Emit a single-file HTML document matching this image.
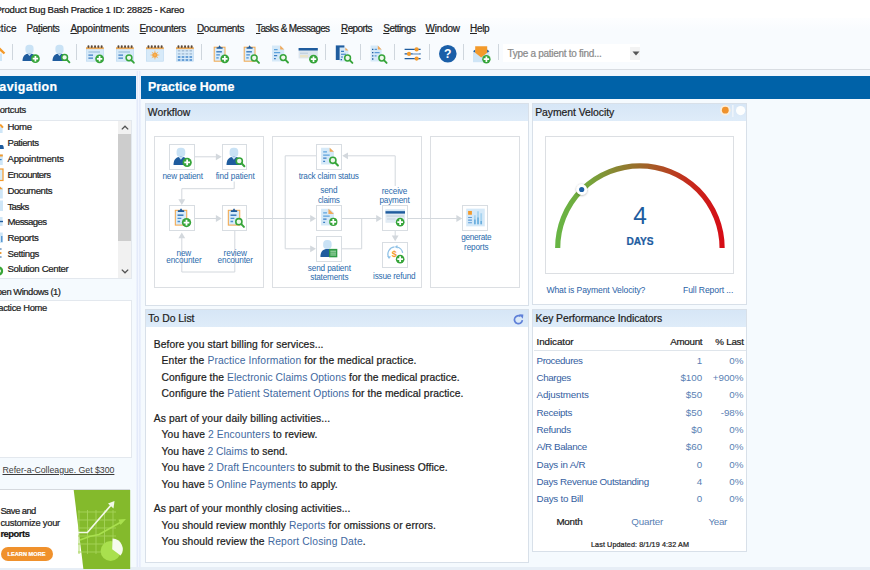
<!DOCTYPE html>
<html lang="en"><head><meta charset="utf-8"><title>Product Bug Bash Practice 1 ID: 28825 - Kareo</title>
<style>
html,body{margin:0;padding:0}
body{width:870px;height:570px;overflow:hidden;position:relative;background:#f5fafe;font-family:"Liberation Sans",sans-serif;color:#222}
.t{position:absolute;white-space:pre;margin:0;-webkit-text-stroke:0.22px currentColor}
.b{position:absolute;box-sizing:border-box}
svg{position:absolute;overflow:visible}
a{color:inherit;text-decoration:none}
.lk{color:#41699f;-webkit-text-stroke:0}
.n{-webkit-text-stroke:0}
u{text-decoration:underline;text-underline-offset:1px}
</style></head><body>
<div class="b" style="left:0px;top:0px;width:870px;height:18px;background:#fff"></div>
<div class="b" style="left:0px;top:18px;width:870px;height:51px;background:linear-gradient(#fdfeff,#f8fbfe 25%)"></div>
<div class="b" style="left:0px;top:69px;width:870px;height:1px;background:#d9dde2"></div>
<div class="b" style="left:0px;top:70px;width:870px;height:6.3px;background:#f1f6fc"></div>
<div class="b" style="left:0px;top:76.3px;width:135.5px;height:22.4px;background:#0062a8"></div>
<div class="b" style="left:141px;top:76.3px;width:729px;height:22.4px;background:#0062a8"></div>
<div class="b" style="left:135.8px;top:71px;width:4.8px;height:496px;background:linear-gradient(90deg,#f6f9ff,#dfe7f8 25%,#f2f6ff 50%,#dfe7f8 80%,#f6f9ff)"></div>
<div class="b" style="left:0px;top:566.5px;width:870px;height:3.5px;background:#e7eef6"></div>
<div class="b" style="left:12.0px;top:43.5px;width:1.0px;height:16.5px;background:#cfd6dd"></div>
<div class="b" style="left:76.2px;top:43.5px;width:1.0px;height:16.5px;background:#cfd6dd"></div>
<div class="b" style="left:200.8px;top:43.5px;width:1.0px;height:16.5px;background:#cfd6dd"></div>
<div class="b" style="left:324.8px;top:43.5px;width:1.0px;height:16.5px;background:#cfd6dd"></div>
<div class="b" style="left:359.5px;top:43.5px;width:1.0px;height:16.5px;background:#cfd6dd"></div>
<div class="b" style="left:394.2px;top:43.5px;width:1.0px;height:16.5px;background:#cfd6dd"></div>
<div class="b" style="left:428.5px;top:43.5px;width:1.0px;height:16.5px;background:#cfd6dd"></div>
<div class="b" style="left:463.2px;top:43.5px;width:1.0px;height:16.5px;background:#cfd6dd"></div>
<div class="b" style="left:498.2px;top:43.5px;width:1.0px;height:16.5px;background:#cfd6dd"></div>
<div class="b" style="left:503px;top:43.5px;width:137px;height:18.5px;background:#fff"></div>
<div class="b" style="left:630px;top:46.5px;width:10px;height:13.5px;background:#f3f3f3"></div>
<svg style="left:632px;top:51px" width="8" height="5" viewBox="0 0 8 5"><path d="M0.5 0.5h7l-3.5 4z" fill="#555"/></svg>
<div class="b" style="left:-2px;top:119.5px;width:134px;height:159.5px;background:#fff;border:1px solid #e3e8ee"></div>
<div class="b" style="left:118.3px;top:120.5px;width:12.7px;height:157.5px;background:#f1f1f1"></div>
<div class="b" style="left:118.3px;top:134px;width:12.7px;height:107px;background:#cdcdcd"></div>
<svg style="left:120.6px;top:124.5px" width="8" height="5" viewBox="0 0 8 5"><path d="M0.8 4.4L4 1.2l3.2 3.2" fill="none" stroke="#505050" stroke-width="1.3"/></svg>
<svg style="left:120.6px;top:268.7px" width="8" height="5" viewBox="0 0 8 5"><path d="M0.8 0.6L4 3.8L7.2 0.6" fill="none" stroke="#505050" stroke-width="1.3"/></svg>
<div class="b" style="left:-2px;top:300px;width:134px;height:157.5px;background:#fff;border:1px solid #e3e8ee"></div>
<svg style="left:0;top:0" width="8" height="300" viewBox="0 0 8 300"><rect x="0" y="127" width="2.6" height="6" fill="#cfe6f7"/><path d="M0 124.5L3 127.6" stroke="#f39a2b" stroke-width="2"/><path d="M0 145h2.2c1 0 1.6 1.6 1.6 4H0z" fill="#1f5c9e"/><rect x="0" y="154.5" width="2.8" height="10.5" fill="#cfe6f7"/><rect x="0" y="154.5" width="2.8" height="2" fill="#f39a2b"/><rect x="0" y="159" width="1.6" height="1.2" fill="#3e86c9"/><rect x="-1" y="169" width="4" height="11.5" fill="#d6ebf9" stroke="#f39a2b" stroke-width="1.2"/><rect x="0" y="187.5" width="2.8" height="11" fill="#cfe6f7"/><path d="M0 186.5l2.8 2.8H0z" fill="#f39a2b"/><rect x="0" y="200.5" width="3" height="10.5" fill="#cfe6f7"/><rect x="0" y="217" width="2.6" height="9" fill="#cfe6f7"/><path d="M0 221.5h3" stroke="#1f5c9e" stroke-width="1.4"/><rect x="0" y="232.5" width="2.8" height="10.5" fill="#cfe6f7"/><rect x="1.2" y="236" width="1.2" height="6" fill="#3e86c9"/><path d="M0 249h1.6M0 253h1M0 257h1.6" stroke="#1f5c9e" stroke-width="1.2"/><circle cx="0.6" cy="253" r="1" fill="#f39a2b"/><path d="M0 266.5A4.8 4.8 0 0 1 0 275.5z" fill="#3aa637"/><path d="M0 269.3A2 2 0 0 1 0 272.8z" fill="#e9f6e6"/></svg>
<div class="b" style="left:-2px;top:489.2px;width:132.2px;height:78.8px;background:#fff;border-top:1px solid #d5d9de"></div>
<svg style="left:0;top:489.6px" width="131" height="79" viewBox="0 0 131 79"><polygon points="73.7,0 130.2,0 130.2,79 83.4,79" fill="#84ba2c"/><g stroke="#a6d45a" stroke-width="0.9" fill="none"><path d="M79 20V64"/><path d="M87.5 20V64"/><path d="M96 20V64"/><path d="M104.5 20V64"/><path d="M113 20V64"/><path d="M78 22H116"/><path d="M78 30H116"/><path d="M78 38H116"/><path d="M78 46H116"/><path d="M78 54H116"/><path d="M78 62H116"/></g><path d="M78 42.5H87.4L112 14" fill="none" stroke="#f3f9e8" stroke-width="1.7"/><polygon points="114.5,11 113.5,18.5 108,13.5" fill="#f3f9e8"/><path d="M80 50L89.5 46.5L99 44.5L122 31.5" fill="none" stroke="#a9e04e" stroke-width="1.7"/><polygon points="126,29 120.5,35 118.5,29.5" fill="#a9e04e"/><circle cx="110.6" cy="61" r="10" fill="#a9e04e"/><path d="M112.2 59.2L112.6 48.6A10.6 10.6 0 0 1 120.6 65.6Z" fill="#f6fbee"/></svg>
<div class="b" style="left:0.6px;top:547.3px;width:52.8px;height:14.0px;background:#f0912c;border-radius:7px"></div>
<div class="b" style="left:144.7px;top:103px;width:383.9px;height:202.5px;background:#fff;border:1px solid #d8e0e9"></div>
<div class="b" style="left:145.7px;top:104px;width:381.9px;height:17.3px;background:linear-gradient(#d6e6f6,#dfecf9)"></div>
<div class="b" style="left:532.4px;top:103px;width:214.2px;height:202.2px;background:#fff;border:1px solid #d8e0e9"></div>
<div class="b" style="left:533.4px;top:104px;width:212.2px;height:17.3px;background:linear-gradient(#d6e6f6,#dfecf9)"></div>
<div class="b" style="left:144.7px;top:309px;width:384.5px;height:254px;background:#fff;border:1px solid #d8e0e9"></div>
<div class="b" style="left:145.7px;top:310px;width:382.5px;height:17.3px;background:linear-gradient(#d6e6f6,#dfecf9)"></div>
<div class="b" style="left:532.4px;top:309px;width:215.0px;height:243px;background:#fff;border:1px solid #d8e0e9"></div>
<div class="b" style="left:533.4px;top:310px;width:213.0px;height:17.3px;background:linear-gradient(#d6e6f6,#dfecf9)"></div>
<div class="b" style="left:154px;top:136px;width:110px;height:152px;border:1px solid #dcdfe3"></div>
<div class="b" style="left:272px;top:136px;width:150px;height:152px;border:1px solid #dcdfe3"></div>
<div class="b" style="left:430px;top:136px;width:90.4px;height:152px;border:1px solid #dcdfe3"></div>
<div class="b" style="left:545px;top:136px;width:189px;height:138px;border:1px solid #dcdfe3"></div>
<svg style="left:22.3px;top:44.9px" width="18" height="18" viewBox="0 0 18 18"><rect x="3.4" y="-0.2" width="8.2" height="8.8" rx="3.6" fill="#c9e2f5"/><path d="M0.5 16c0-4.6 2.2-7.6 7-7.6s7 3 7 7.6z" fill="#1f5c9e"/><path d="M5.4 8.5l2.1 2.6 2.1-2.6z" fill="#c9e2f5"/><circle cx="13.4" cy="13.7" r="4.4" fill="#36a53a"/><path d="M13.4 11.0v5.4M10.7 13.7h5.4" stroke="#fff" stroke-width="1.7"/></svg>
<svg style="left:52.3px;top:44.9px" width="18" height="18" viewBox="0 0 18 18"><rect x="3.4" y="-0.2" width="8.2" height="8.8" rx="3.6" fill="#c9e2f5"/><path d="M0.5 16c0-4.6 2.2-7.6 7-7.6s7 3 7 7.6z" fill="#1f5c9e"/><path d="M5.4 8.5l2.1 2.6 2.1-2.6z" fill="#c9e2f5"/><circle cx="12.6" cy="12.4" r="2.9" fill="#eef8ec" stroke="#36a53a" stroke-width="1.5"/><path d="M14.899999999999999 14.7l2.5 2.6" stroke="#36a53a" stroke-width="1.9" stroke-linecap="round"/></svg>
<svg style="left:86.2px;top:44.9px" width="18" height="18" viewBox="0 0 18 18"><rect x="0.3" y="3.6" width="17.2" height="12.6" fill="#d7eaf9" stroke="#b9d8f0" stroke-width="0.6"/><rect x="0" y="2.2" width="17.8" height="1.9" fill="#eba856"/><rect x="1.5" y="0.2" width="1.9" height="2.8" rx="0.9" fill="#5b4a3c"/><rect x="4.8" y="0.2" width="1.9" height="2.8" rx="0.9" fill="#5b4a3c"/><rect x="8.1" y="0.2" width="1.9" height="2.8" rx="0.9" fill="#5b4a3c"/><rect x="11.399999999999999" y="0.2" width="1.9" height="2.8" rx="0.9" fill="#5b4a3c"/><rect x="14.7" y="0.2" width="1.9" height="2.8" rx="0.9" fill="#5b4a3c"/><path d="M2.4 7h11.6" stroke="#9dbfdc" stroke-width="1.2"/><path d="M2.4 10.2h4.6M2.4 13.2h4.6" stroke="#3e7fc4" stroke-width="1.3"/><circle cx="13.6" cy="13.8" r="4.4" fill="#36a53a"/><path d="M13.6 11.100000000000001v5.4M10.899999999999999 13.8h5.4" stroke="#fff" stroke-width="1.7"/></svg>
<svg style="left:116.2px;top:44.9px" width="18" height="18" viewBox="0 0 18 18"><rect x="0.3" y="3.6" width="17.2" height="12.6" fill="#d7eaf9" stroke="#b9d8f0" stroke-width="0.6"/><rect x="0" y="2.2" width="17.8" height="1.9" fill="#eba856"/><rect x="1.5" y="0.2" width="1.9" height="2.8" rx="0.9" fill="#5b4a3c"/><rect x="4.8" y="0.2" width="1.9" height="2.8" rx="0.9" fill="#5b4a3c"/><rect x="8.1" y="0.2" width="1.9" height="2.8" rx="0.9" fill="#5b4a3c"/><rect x="11.399999999999999" y="0.2" width="1.9" height="2.8" rx="0.9" fill="#5b4a3c"/><rect x="14.7" y="0.2" width="1.9" height="2.8" rx="0.9" fill="#5b4a3c"/><path d="M2.4 7h11.6" stroke="#9dbfdc" stroke-width="1.2"/><path d="M2.4 10.2h4.6M2.4 13.2h4.6" stroke="#3e7fc4" stroke-width="1.3"/><circle cx="13" cy="12.8" r="2.9" fill="#eef8ec" stroke="#36a53a" stroke-width="1.5"/><path d="M15.3 15.100000000000001l2.5 2.6" stroke="#36a53a" stroke-width="1.9" stroke-linecap="round"/></svg>
<svg style="left:145.5px;top:44.9px" width="18" height="18" viewBox="0 0 18 18"><rect x="0.3" y="3.6" width="17.2" height="12.6" fill="#d7eaf9" stroke="#b9d8f0" stroke-width="0.6"/><rect x="0" y="2.2" width="17.8" height="1.9" fill="#eba856"/><rect x="1.5" y="0.2" width="1.9" height="2.8" rx="0.9" fill="#5b4a3c"/><rect x="4.8" y="0.2" width="1.9" height="2.8" rx="0.9" fill="#5b4a3c"/><rect x="8.1" y="0.2" width="1.9" height="2.8" rx="0.9" fill="#5b4a3c"/><rect x="11.399999999999999" y="0.2" width="1.9" height="2.8" rx="0.9" fill="#5b4a3c"/><rect x="14.7" y="0.2" width="1.9" height="2.8" rx="0.9" fill="#5b4a3c"/><circle cx="8.9" cy="10" r="2.6" fill="#f39a2b"/><path d="M8.9 5.6v8.8M4.5 10h8.8M5.8 6.9l6.2 6.2M12 6.9l-6.2 6.2" stroke="#f5b25e" stroke-width="0.8"/></svg>
<svg style="left:175.7px;top:44.9px" width="18" height="18" viewBox="0 0 18 18"><rect x="0.3" y="3.6" width="17.2" height="12.6" fill="#d7eaf9" stroke="#b9d8f0" stroke-width="0.6"/><rect x="0" y="2.2" width="17.8" height="1.9" fill="#eba856"/><rect x="1.5" y="0.2" width="1.9" height="2.8" rx="0.9" fill="#5b4a3c"/><rect x="4.8" y="0.2" width="1.9" height="2.8" rx="0.9" fill="#5b4a3c"/><rect x="8.1" y="0.2" width="1.9" height="2.8" rx="0.9" fill="#5b4a3c"/><rect x="11.399999999999999" y="0.2" width="1.9" height="2.8" rx="0.9" fill="#5b4a3c"/><rect x="14.7" y="0.2" width="1.9" height="2.8" rx="0.9" fill="#5b4a3c"/><path d="M1.8 5.8h2.6" stroke="#9fb9d2" stroke-width="1.3"/><path d="M1.8 8.9h2.6" stroke="#9fb9d2" stroke-width="1.3"/><path d="M1.8 12h2.6" stroke="#2d78c4" stroke-width="1.3"/><path d="M1.8 15h2.6" stroke="#2d78c4" stroke-width="1.3"/><path d="M5.7 5.8h2.6" stroke="#9fb9d2" stroke-width="1.3"/><path d="M5.7 8.9h2.6" stroke="#9fb9d2" stroke-width="1.3"/><path d="M5.7 12h2.6" stroke="#2d78c4" stroke-width="1.3"/><path d="M5.7 15h2.6" stroke="#2d78c4" stroke-width="1.3"/><path d="M9.6 5.8h2.6" stroke="#9fb9d2" stroke-width="1.3"/><path d="M9.6 8.9h2.6" stroke="#9fb9d2" stroke-width="1.3"/><path d="M9.6 12h2.6" stroke="#2d78c4" stroke-width="1.3"/><path d="M9.6 15h2.6" stroke="#2d78c4" stroke-width="1.3"/><path d="M13.5 5.8h2.6" stroke="#9fb9d2" stroke-width="1.3"/><path d="M13.5 8.9h2.6" stroke="#9fb9d2" stroke-width="1.3"/><path d="M13.5 12h2.6" stroke="#2d78c4" stroke-width="1.3"/><path d="M13.5 15h2.6" stroke="#2d78c4" stroke-width="1.3"/></svg>
<svg style="left:211.5px;top:44.9px" width="18" height="18" viewBox="0 0 18 18"><rect x="2.2" y="2.2" width="10.8" height="14" fill="#d9ecfa" stroke="#f3a94e" stroke-width="1"/><path d="M4.6 3.8V2.2h1.7L7.6 0.2l1.3 2h1.7v1.6z" fill="#1f5c9e"/><path d="M4.3 6.8h5.6" stroke="#2d6fb5" stroke-width="1.3"/><path d="M4.3 9.8h3.6M4.3 12.8h2.4" stroke="#4b8fd0" stroke-width="1.3"/><circle cx="12.8" cy="13.8" r="4.4" fill="#36a53a"/><path d="M12.8 11.100000000000001v5.4M10.100000000000001 13.8h5.4" stroke="#fff" stroke-width="1.7"/></svg>
<svg style="left:241.6px;top:44.9px" width="18" height="18" viewBox="0 0 18 18"><rect x="2.2" y="2.2" width="10.8" height="14" fill="#d9ecfa" stroke="#f3a94e" stroke-width="1"/><path d="M4.6 3.8V2.2h1.7L7.6 0.2l1.3 2h1.7v1.6z" fill="#1f5c9e"/><path d="M4.3 6.8h5.6" stroke="#2d6fb5" stroke-width="1.3"/><path d="M4.3 9.8h3.6M4.3 12.8h2.4" stroke="#4b8fd0" stroke-width="1.3"/><circle cx="12.2" cy="13" r="2.9" fill="#eef8ec" stroke="#36a53a" stroke-width="1.5"/><path d="M14.5 15.3l2.5 2.6" stroke="#36a53a" stroke-width="1.9" stroke-linecap="round"/></svg>
<svg style="left:270.6px;top:44.9px" width="18" height="18" viewBox="0 0 18 18"><path d="M1 0.6h8.2l4 4V16.6H1z" fill="#d5e9f8"/><path d="M9.2 0.6l4 4H9.2z" fill="#f2a95a"/><path d="M3 4.6h3.6M3 7.6h6.2" stroke="#5ea3dc" stroke-width="1.2"/><path d="M3 10.6h3.2M3 13.6h1.8" stroke="#3b7fc4" stroke-width="1.2"/><circle cx="12.2" cy="12.6" r="2.9" fill="#eef8ec" stroke="#36a53a" stroke-width="1.5"/><path d="M14.5 14.899999999999999l2.5 2.6" stroke="#36a53a" stroke-width="1.9" stroke-linecap="round"/></svg>
<svg style="left:299.4px;top:44.9px" width="18" height="18" viewBox="0 0 18 18"><rect x="-0.4" y="3" width="19.2" height="10.4" fill="#dde6ee"/><rect x="-0.4" y="3" width="19.2" height="2.5" fill="#1f5c9e"/><rect x="1" y="7.6" width="8" height="1.4" fill="#c4d3e0"/><rect x="1" y="10" width="8" height="2.4" fill="#e9e3c8"/><circle cx="14.5" cy="14.2" r="4.4" fill="#36a53a"/><path d="M14.5 11.5v5.4M11.8 14.2h5.4" stroke="#fff" stroke-width="1.7"/></svg>
<svg style="left:335px;top:44.9px" width="18" height="18" viewBox="0 0 18 18"><path d="M0.8 0.4h8.6v14.6H0.8z" fill="#1f5c9e"/><path d="M4.6 2.6h5.8l3 3V16.4H4.6z" fill="#d5e9f8"/><path d="M10.4 2.6l3 3h-3z" fill="#f2a95a"/><path d="M6 6.4h3M6 9.2h5M6 12h2" stroke="#3b7fc4" stroke-width="1.1"/><path d="M5.6 14.6h1.4" stroke="#1f5c9e" stroke-width="1.1"/><circle cx="12.6" cy="13" r="2.9" fill="#eef8ec" stroke="#36a53a" stroke-width="1.5"/><path d="M14.899999999999999 15.3l2.5 2.6" stroke="#36a53a" stroke-width="1.9" stroke-linecap="round"/></svg>
<svg style="left:369.2px;top:44.9px" width="18" height="18" viewBox="0 0 18 18"><path d="M1.6 0.6h7.2l3.8 3.8V16.6H1.6z" fill="#d5e9f8"/><path d="M8.8 0.6l3.8 3.8H8.8z" fill="#f2a95a"/><path d="M3 4.4h1.4M3 7.6h1.4M3 10.8h1.4M3 14h1.4" stroke="#1f5c9e" stroke-width="1.3"/><path d="M5.6 4.4h2.4M5.6 7.6h5M5.6 10.8h2" stroke="#5b9ad6" stroke-width="1.2"/><circle cx="12.8" cy="13" r="2.9" fill="#eef8ec" stroke="#36a53a" stroke-width="1.5"/><path d="M15.100000000000001 15.3l2.5 2.6" stroke="#36a53a" stroke-width="1.9" stroke-linecap="round"/></svg>
<svg style="left:404px;top:44.9px" width="18" height="18" viewBox="0 0 18 18"><path d="M0.6 4.4h16M0.6 8.9h16M0.6 13.6h16" stroke="#1f5c9e" stroke-width="1.4"/><path d="M8.6 8.9h7" stroke="#bcd0e4" stroke-width="1.4"/><circle cx="12.6" cy="4.4" r="2.1" fill="#f39a2b"/><circle cx="5" cy="8.9" r="2.1" fill="#f39a2b"/><circle cx="12.6" cy="13.6" r="2.1" fill="#f39a2b"/></svg>
<svg style="left:473.3px;top:45.8px" width="18" height="18" viewBox="0 0 18 18"><path d="M0 5.6h16.4v10.6H0z" fill="#cfe5f6"/><path d="M0 5.2l2.4-1.8v3.4zM16.4 5.2L14 3.4v3.4z" fill="#1f5c9e"/><path d="M2.2 0.2h12v6.6L8.2 11.6L2.2 6.8z" fill="#f39a2b"/><circle cx="13.4" cy="13.2" r="4.2" fill="#36a53a"/><path d="M13.4 10.5v5.4M10.7 13.2h5.4" stroke="#fff" stroke-width="1.7"/></svg>
<svg style="left:438.7px;top:44.5px" width="17.6" height="17.6" viewBox="0 0 18 18"><circle cx="9" cy="9" r="9" fill="#1b5fa8"/><text x="9" y="13.4" text-anchor="middle" font-size="12.5" font-weight="bold" fill="#fff" font-family="Liberation Sans,sans-serif">?</text></svg>
<svg style="left:-13px;top:44px" width="18" height="18" viewBox="0 0 18 18"><path d="M3 9.5h12V17H3z" fill="#cfe6f7"/><path d="M0.5 9.5L9 1.5l8.5 8" fill="none" stroke="#f39a2b" stroke-width="2.4"/></svg>
<svg style="left:0;top:0" width="870" height="570" viewBox="0 0 870 570"><g fill="none" stroke="#d3d8dd" stroke-width="1"><path d="M194.7 156.8H217"/><path d="M234.2 181.5V188.7H181.8V200"/><path d="M194.7 218.5H217"/><path d="M234.8 230.3V272H181.8V238"/><path d="M247.6 218.5H311"/><path d="M316.5 155.8H285.2V248.8H311"/><path d="M341.7 218.5H377"/><path d="M341.7 248.8H361.7V218.5"/><path d="M395.2 186V155.8H347"/><path d="M395.2 230.3V236"/><path d="M407.7 218.5H457"/></g><polygon points="221.7,156.8 215.89999999999998,153.4 215.89999999999998,160.20000000000002" fill="#d3d8dd"/><polygon points="181.8,205 178.4,199.2 185.20000000000002,199.2" fill="#d3d8dd"/><polygon points="221.7,218.5 215.89999999999998,215.1 215.89999999999998,221.9" fill="#d3d8dd"/><polygon points="181.8,232.5 178.4,238.3 185.20000000000002,238.3" fill="#d3d8dd"/><polygon points="316,218.5 310.2,215.1 310.2,221.9" fill="#d3d8dd"/><polygon points="316,248.8 310.2,245.4 310.2,252.20000000000002" fill="#d3d8dd"/><polygon points="382,218.5 376.2,215.1 376.2,221.9" fill="#d3d8dd"/><polygon points="342.2,155.8 348.0,152.4 348.0,159.20000000000002" fill="#d3d8dd"/><polygon points="395.2,241.2 391.8,235.39999999999998 398.59999999999997,235.39999999999998" fill="#d3d8dd"/><polygon points="462.2,218.5 456.4,215.1 456.4,221.9" fill="#d3d8dd"/></svg>
<div class="b" style="left:169px;top:144px;width:26px;height:26px;background:#fff;border:1px solid #d8dde2"></div>
<svg style="left:173.2px;top:148.4px" width="19" height="19" viewBox="0 0 18 18"><rect x="3.4" y="-0.2" width="8.2" height="8.8" rx="3.6" fill="#c9e2f5"/><path d="M0.5 16c0-4.6 2.2-7.6 7-7.6s7 3 7 7.6z" fill="#1f5c9e"/><path d="M5.4 8.5l2.1 2.6 2.1-2.6z" fill="#c9e2f5"/><circle cx="13.4" cy="13.7" r="4.4" fill="#36a53a"/><path d="M13.4 11.0v5.4M10.7 13.7h5.4" stroke="#fff" stroke-width="1.7"/></svg>
<div class="b" style="left:222px;top:144px;width:25px;height:26px;background:#fff;border:1px solid #d8dde2"></div>
<svg style="left:225.8px;top:148.4px" width="19" height="19" viewBox="0 0 18 18"><rect x="3.4" y="-0.2" width="8.2" height="8.8" rx="3.6" fill="#c9e2f5"/><path d="M0.5 16c0-4.6 2.2-7.6 7-7.6s7 3 7 7.6z" fill="#1f5c9e"/><path d="M5.4 8.5l2.1 2.6 2.1-2.6z" fill="#c9e2f5"/><circle cx="12.6" cy="12.4" r="2.9" fill="#eef8ec" stroke="#36a53a" stroke-width="1.5"/><path d="M14.899999999999999 14.7l2.5 2.6" stroke="#36a53a" stroke-width="1.9" stroke-linecap="round"/></svg>
<div class="b" style="left:169px;top:205px;width:26px;height:26px;background:#fff;border:1px solid #d8dde2"></div>
<svg style="left:173.2px;top:208.4px" width="19" height="19" viewBox="0 0 18 18"><rect x="2.2" y="2.2" width="10.8" height="14" fill="#d9ecfa" stroke="#f3a94e" stroke-width="1"/><path d="M4.6 3.8V2.2h1.7L7.6 0.2l1.3 2h1.7v1.6z" fill="#1f5c9e"/><path d="M4.3 6.8h5.6" stroke="#2d6fb5" stroke-width="1.3"/><path d="M4.3 9.8h3.6M4.3 12.8h2.4" stroke="#4b8fd0" stroke-width="1.3"/><circle cx="12.8" cy="13.8" r="4.4" fill="#36a53a"/><path d="M12.8 11.100000000000001v5.4M10.100000000000001 13.8h5.4" stroke="#fff" stroke-width="1.7"/></svg>
<div class="b" style="left:222px;top:205px;width:25px;height:26px;background:#fff;border:1px solid #d8dde2"></div>
<svg style="left:225.8px;top:208.4px" width="19" height="19" viewBox="0 0 18 18"><rect x="2.2" y="2.2" width="10.8" height="14" fill="#d9ecfa" stroke="#f3a94e" stroke-width="1"/><path d="M4.6 3.8V2.2h1.7L7.6 0.2l1.3 2h1.7v1.6z" fill="#1f5c9e"/><path d="M4.3 6.8h5.6" stroke="#2d6fb5" stroke-width="1.3"/><path d="M4.3 9.8h3.6M4.3 12.8h2.4" stroke="#4b8fd0" stroke-width="1.3"/><circle cx="12.2" cy="13" r="2.9" fill="#eef8ec" stroke="#36a53a" stroke-width="1.5"/><path d="M14.5 15.3l2.5 2.6" stroke="#36a53a" stroke-width="1.9" stroke-linecap="round"/></svg>
<div class="b" style="left:316px;top:144px;width:26px;height:26px;background:#fff;border:1px solid #d8dde2"></div>
<svg style="left:320.2px;top:147.4px" width="19" height="19" viewBox="0 0 18 18"><path d="M1 0.6h8.2l4 4V16.6H1z" fill="#d5e9f8"/><path d="M9.2 0.6l4 4H9.2z" fill="#f2a95a"/><path d="M3 4.6h3.6M3 7.6h6.2" stroke="#5ea3dc" stroke-width="1.2"/><path d="M3 10.6h3.2M3 13.6h1.8" stroke="#3b7fc4" stroke-width="1.2"/><circle cx="12.2" cy="12.6" r="2.9" fill="#eef8ec" stroke="#36a53a" stroke-width="1.5"/><path d="M14.5 14.899999999999999l2.5 2.6" stroke="#36a53a" stroke-width="1.9" stroke-linecap="round"/></svg>
<div class="b" style="left:316px;top:205px;width:26px;height:26px;background:#fff;border:1px solid #d8dde2"></div>
<svg style="left:320.2px;top:208.4px" width="19" height="19" viewBox="0 0 18 18"><path d="M1 0.6h8.2l4 4V16.6H1z" fill="#d5e9f8"/><path d="M8 0.6l5.2 5.2H8z" fill="#f2a95a"/><path d="M3 4.6h3.6M3 7.6h6.2" stroke="#5ea3dc" stroke-width="1.2"/><path d="M3 10.6h3.2M3 13.6h1.8" stroke="#3b7fc4" stroke-width="1.2"/><circle cx="12.6" cy="13.2" r="3.9" fill="#36a53a"/><path d="M12.6 10.5v5.4M9.899999999999999 13.2h5.4" stroke="#fff" stroke-width="1.7"/></svg>
<div class="b" style="left:316px;top:236px;width:26px;height:26px;background:#fff;border:1px solid #d8dde2"></div>
<svg style="left:320.2px;top:240px" width="19" height="19" viewBox="0 0 18 18"><rect x="3" y="0" width="8" height="8.6" rx="3.6" fill="#c9e2f5"/><path d="M0.4 16c0-4.6 2.2-7.4 6.6-7.4s6.6 2.8 6.6 7.4z" fill="#1f5c9e"/><rect x="8.6" y="8.4" width="7.8" height="8" fill="#2f9a45"/><path d="M9.8 10.6h5.4M9.8 12.4h5.4M9.8 14.2h5.4" stroke="#cdeccf" stroke-width="0.8"/></svg>
<div class="b" style="left:382px;top:205px;width:26px;height:26px;background:#fff;border:1px solid #d8dde2"></div>
<svg style="left:386.2px;top:208.4px" width="19" height="19" viewBox="0 0 18 18"><rect x="-0.5" y="1.4" width="18.5" height="12.6" fill="#e1ebf4"/><rect x="-0.5" y="1.4" width="18.5" height="1.6" fill="#cfe5f6"/><rect x="-0.5" y="3" width="18.5" height="2.3" fill="#1f5c9e"/><path d="M0.5 7.6h16.5" stroke="#c2cfdb" stroke-width="1"/><path d="M1 10.4h8" stroke="#c9d6e2" stroke-width="1.1"/><circle cx="13.4" cy="13.4" r="4.1" fill="#36a53a"/><path d="M13.4 10.7v5.4M10.7 13.4h5.4" stroke="#fff" stroke-width="1.7"/></svg>
<div class="b" style="left:382px;top:242px;width:26px;height:26px;background:#fff;border:1px solid #d8dde2"></div>
<svg style="left:386.2px;top:245.4px" width="19" height="19" viewBox="0 0 18 18"><path d="M2.6 12A7 7 0 0 1 8 1.8" fill="none" stroke="#8fc1e6" stroke-width="1.2"/><path d="M1.2 10.4l1.6 2.8L4.8 10.8z" fill="#8fc1e6"/><path d="M15.8 7.4A7 7 0 0 0 10.4 1.9" fill="none" stroke="#8fc1e6" stroke-width="1.2"/><path d="M10.8 0l-2.6 1.9 2.8 1.5z" fill="#8fc1e6"/><text x="5.4" y="11" font-size="8.6" font-weight="bold" fill="#f39a2b" font-family="Liberation Sans,sans-serif">$</text><circle cx="13.4" cy="13.4" r="4.1" fill="#36a53a"/><path d="M13.4 10.7v5.4M10.7 13.4h5.4" stroke="#fff" stroke-width="1.7"/></svg>
<div class="b" style="left:462px;top:205px;width:26px;height:26px;background:#fff;border:1px solid #d8dde2"></div>
<svg style="left:466.2px;top:208.4px" width="19" height="19" viewBox="0 0 18 18"><rect x="0.2" y="0.6" width="17.6" height="16.8" fill="#d5e9f8"/><rect x="2" y="2.8" width="3.6" height="3.6" fill="#f39a2b"/><path d="M2 9h3.6M2 11.5h3.6M2 14h3.6" stroke="#5b9ad6" stroke-width="1.1"/><path d="M8.4 15.4V6.8M11.4 15.4V3M14.4 15.4V5" stroke="#a6d3f0" stroke-width="1.7"/><path d="M8.4 15.4V11M11.4 15.4V9M14.4 15.4V12.4" stroke="#6aaede" stroke-width="1.5"/></svg>
<svg style="left:0;top:0" width="870" height="570" viewBox="0 0 870 570"><defs><linearGradient id="gg" gradientUnits="userSpaceOnUse" x1="557" y1="0" x2="723" y2="0"><stop offset="0" stop-color="#68b544"/><stop offset="0.18" stop-color="#74a83c"/><stop offset="0.5" stop-color="#9c6a2a"/><stop offset="0.8" stop-color="#c62a1c"/><stop offset="1" stop-color="#d60c16"/></linearGradient><filter id="sh" x="-50%" y="-50%" width="200%" height="200%"><feDropShadow dx="0" dy="0.6" stdDeviation="0.9" flood-color="#000" flood-opacity="0.35"/></filter></defs><path d="M557.7 248A82.2 82.2 0 0 1 722.1 248" fill="none" stroke="url(#gg)" stroke-width="5.2"/><circle cx="581.7" cy="189.5" r="5.4" fill="#fff" filter="url(#sh)"/><circle cx="581.7" cy="189.5" r="2.6" fill="#1c5fa5"/><circle cx="725.3" cy="110.2" r="5.3" fill="#fbefdd"/><circle cx="725.3" cy="110.2" r="3.4" fill="#ef922c"/><circle cx="740.6" cy="110.6" r="4.6" fill="#fdfefe"/><rect x="732" y="105" width="1.6" height="12" fill="#eef4fa"/></svg>
<svg style="left:512.5px;top:314px" width="11" height="11" viewBox="0 0 11 11"><path d="M9.4 6.2A4 4 0 1 1 7.6 2.3" fill="none" stroke="#5f80d8" stroke-width="1.7"/><path d="M6 0.2L10.4 0.4L9.8 4.8z" fill="#5f80d8"/></svg>
<div class="b" style="left:534.3px;top:349.5px;width:212.1px;height:1.0px;background:#dfe5eb"></div>
<div class="t" style="top:3px;font-size:9.6px;line-height:14px;color:#1a1a1a;letter-spacing:-0.279px;left:-4.5px;">Product Bug Bash Practice 1 ID: 28825 - Kareo</div>
<div class="t" style="top:22px;font-size:10px;line-height:14px;color:#222;letter-spacing:0.059px;left:-20px;">Practice</div>
<div class="t" style="top:22px;font-size:10px;line-height:14px;color:#222;letter-spacing:-0.418px;left:26.6px;">Pa<u>t</u>ients</div>
<div class="t" style="top:22px;font-size:10px;line-height:14px;color:#222;letter-spacing:-0.213px;left:70.4px;"><u>A</u>ppointments</div>
<div class="t" style="top:22px;font-size:10px;line-height:14px;color:#222;letter-spacing:-0.439px;left:139.6px;"><u>E</u>ncounters</div>
<div class="t" style="top:22px;font-size:10px;line-height:14px;color:#222;letter-spacing:-0.399px;left:197px;"><u>D</u>ocuments</div>
<div class="t" style="top:22px;font-size:10px;line-height:14px;color:#222;letter-spacing:-0.617px;left:256px;"><u>T</u>asks &amp; Messages</div>
<div class="t" style="top:22px;font-size:10px;line-height:14px;color:#222;letter-spacing:-0.604px;left:341px;"><u>R</u>eports</div>
<div class="t" style="top:22px;font-size:10px;line-height:14px;color:#222;letter-spacing:-0.468px;left:383.2px;"><u>S</u>ettings</div>
<div class="t" style="top:22px;font-size:10px;line-height:14px;color:#222;letter-spacing:-0.232px;left:425.6px;"><u>W</u>indow</div>
<div class="t" style="top:22px;font-size:10px;line-height:14px;color:#222;letter-spacing:-0.298px;left:470px;"><u>H</u>elp</div>
<div class="t" style="top:47px;font-size:10px;line-height:14px;color:#8a8a8a;letter-spacing:-0.287px;left:507.5px;">Type a patient to find...</div>
<div class="t" style="top:79px;font-size:12.4px;line-height:17px;color:#fff;font-weight:bold;letter-spacing:0.416px;left:-10px;">Navigation</div>
<div class="t" style="top:79px;font-size:12.4px;line-height:17px;color:#fff;font-weight:bold;letter-spacing:0.016px;left:148px;">Practice Home</div>
<div class="t" style="top:103px;font-size:9.4px;line-height:13px;color:#222;letter-spacing:-0.257px;left:-11.3px;">Shortcuts</div>
<div class="t" style="top:120px;font-size:9.6px;line-height:14px;color:#222;letter-spacing:-0.348px;left:7.5px;">Home</div>
<div class="t" style="top:136px;font-size:9.6px;line-height:14px;color:#222;letter-spacing:-0.459px;left:7.5px;">Patients</div>
<div class="t" style="top:152px;font-size:9.6px;line-height:14px;color:#222;letter-spacing:-0.198px;left:7.5px;">Appointments</div>
<div class="t" style="top:168px;font-size:9.6px;line-height:14px;color:#222;letter-spacing:-0.553px;left:7.5px;">Encounters</div>
<div class="t" style="top:184px;font-size:9.6px;line-height:14px;color:#222;letter-spacing:-0.448px;left:7.5px;">Documents</div>
<div class="t" style="top:200px;font-size:9.6px;line-height:14px;color:#222;letter-spacing:-0.706px;left:7.5px;">Tasks</div>
<div class="t" style="top:215px;font-size:9.6px;line-height:14px;color:#222;letter-spacing:-0.592px;left:7.5px;">Messages</div>
<div class="t" style="top:231px;font-size:9.6px;line-height:14px;color:#222;letter-spacing:-0.399px;left:7.5px;">Reports</div>
<div class="t" style="top:247px;font-size:9.6px;line-height:14px;color:#222;letter-spacing:-0.396px;left:7.5px;">Settings</div>
<div class="t" style="top:262px;font-size:9.6px;line-height:14px;color:#222;letter-spacing:-0.356px;left:7.5px;">Solution Center</div>
<div class="t" style="top:285px;font-size:9.4px;line-height:13px;color:#222;letter-spacing:-0.446px;left:-10px;">Open Windows (1)</div>
<div class="t" style="top:301px;font-size:9.4px;line-height:13px;color:#222;letter-spacing:-0.306px;left:-10.5px;">Practice Home</div>
<div class="t" style="top:464px;font-size:8.8px;line-height:13px;color:#3c3c3c;letter-spacing:-0.04px;left:2.5px;text-decoration:underline;-webkit-text-stroke:0;">Refer-a-Colleague. Get $300</div>
<div class="t" style="top:504px;font-size:9.4px;line-height:13px;color:#222;letter-spacing:-0.528px;left:0.4px;">Save and</div>
<div class="t" style="top:516px;font-size:9.4px;line-height:13px;color:#222;letter-spacing:-0.246px;left:0.4px;">customize your</div>
<div class="t" style="top:527px;font-size:9.4px;line-height:13px;color:#111;font-weight:bold;letter-spacing:-0.459px;left:0.4px;">reports</div>
<div class="t" style="top:550px;font-size:5.6px;line-height:9px;color:#fff;font-weight:bold;letter-spacing:0.039px;left:7.5px;">LEARN MORE</div>
<div class="t" style="top:106px;font-size:10.4px;line-height:14px;color:#1e1e1e;letter-spacing:-0.006px;left:147.79999999999998px;">Workflow</div>
<div class="t" style="top:106px;font-size:10.4px;line-height:14px;color:#1e1e1e;letter-spacing:-0.038px;left:535.1999999999999px;">Payment Velocity</div>
<div class="t" style="top:312px;font-size:10.4px;line-height:14px;color:#1e1e1e;left:148.29999999999998px;">To Do List</div>
<div class="t" style="top:312px;font-size:10.4px;line-height:14px;color:#1e1e1e;letter-spacing:-0.066px;left:535.6px;">Key Performance Indicators</div>
<div class="t n" style="top:171px;font-size:8.2px;line-height:12px;color:#2a6aac;letter-spacing:-0.126px;left:162.45px;">new patient</div>
<div class="t n" style="top:171px;font-size:8.2px;line-height:12px;color:#2a6aac;letter-spacing:-0.089px;left:215.7px;">find patient</div>
<div class="t n" style="top:248px;font-size:8.2px;line-height:12px;color:#2a6aac;letter-spacing:-0.177px;left:176.55px;">new</div>
<div class="t n" style="top:255px;font-size:8.2px;line-height:12px;color:#2a6aac;letter-spacing:-0.114px;left:166.2px;">encounter</div>
<div class="t n" style="top:248px;font-size:8.2px;line-height:12px;color:#2a6aac;letter-spacing:-0.029px;left:223.45px;">review</div>
<div class="t n" style="top:255px;font-size:8.2px;line-height:12px;color:#2a6aac;letter-spacing:-0.114px;left:217.5px;">encounter</div>
<div class="t n" style="top:171px;font-size:8.2px;line-height:12px;color:#2a6aac;letter-spacing:-0.181px;left:298.7px;">track claim status</div>
<div class="t n" style="top:185px;font-size:8.2px;line-height:12px;color:#2a6aac;letter-spacing:-0.191px;left:320.3px;">send</div>
<div class="t n" style="top:195px;font-size:8.2px;line-height:12px;color:#2a6aac;letter-spacing:-0.284px;left:318.05px;">claims</div>
<div class="t n" style="top:263px;font-size:8.2px;line-height:12px;color:#2a6aac;letter-spacing:-0.135px;left:307.8px;">send patient</div>
<div class="t n" style="top:272px;font-size:8.2px;line-height:12px;color:#2a6aac;letter-spacing:-0.205px;left:310.3px;">statements</div>
<div class="t n" style="top:186px;font-size:8.2px;line-height:12px;color:#2a6aac;letter-spacing:-0.129px;left:381.75px;">receive</div>
<div class="t n" style="top:195px;font-size:8.2px;line-height:12px;color:#2a6aac;letter-spacing:-0.201px;left:379.5px;">payment</div>
<div class="t n" style="top:271px;font-size:8.2px;line-height:12px;color:#2a6aac;letter-spacing:-0.184px;left:373.0px;">issue refund</div>
<div class="t n" style="top:232px;font-size:8.2px;line-height:12px;color:#2a6aac;letter-spacing:-0.291px;left:461.3px;">generate</div>
<div class="t n" style="top:242px;font-size:8.2px;line-height:12px;color:#2a6aac;letter-spacing:-0.141px;left:464.05px;">reports</div>
<div class="t" style="top:200px;font-size:24.5px;line-height:31px;color:#1d5c9f;left:490.20000000000005px;width:300px;text-align:center;-webkit-text-stroke:0;">4</div>
<div class="t" style="top:235px;font-size:10.2px;line-height:14px;color:#1d5c9f;font-weight:bold;letter-spacing:-0.094px;left:626.4px;">DAYS</div>
<div class="t n" style="top:284px;font-size:8.6px;line-height:12px;color:#2a62a6;letter-spacing:-0.114px;left:546.4px;">What is Payment Velocity?</div>
<div class="t n" style="top:284px;font-size:8.6px;line-height:12px;color:#2a62a6;letter-spacing:-0.093px;left:683px;">Full Report ...</div>
<div class="t" style="top:338px;font-size:10.3px;line-height:14px;color:#1c1c1c;letter-spacing:0.098px;left:153.7px;">Before you start billing for services...</div>
<div class="t" style="top:354px;font-size:10.3px;line-height:14px;color:#1c1c1c;letter-spacing:0.116px;left:161.6px;">Enter the <span class="lk">Practice Information</span> for the medical practice.</div>
<div class="t" style="top:371px;font-size:10.3px;line-height:14px;color:#1c1c1c;letter-spacing:0.05px;left:161.6px;">Configure the <span class="lk">Electronic Claims Options</span> for the medical practice.</div>
<div class="t" style="top:387px;font-size:10.3px;line-height:14px;color:#1c1c1c;letter-spacing:0.073px;left:161.6px;">Configure the <span class="lk">Patient Statement Options</span> for the medical practice.</div>
<div class="t" style="top:412px;font-size:10.3px;line-height:14px;color:#1c1c1c;letter-spacing:0.127px;left:153.7px;">As part of your daily billing activities...</div>
<div class="t" style="top:428px;font-size:10.3px;line-height:14px;color:#1c1c1c;letter-spacing:0.107px;left:161.6px;">You have <span class="lk">2 Encounters</span> to review.</div>
<div class="t" style="top:445px;font-size:10.3px;line-height:14px;color:#1c1c1c;letter-spacing:0.038px;left:161.6px;">You have <span class="lk">2 Claims</span> to send.</div>
<div class="t" style="top:461px;font-size:10.3px;line-height:14px;color:#1c1c1c;letter-spacing:0.075px;left:161.6px;">You have <span class="lk">2 Draft Encounters</span> to submit to the Business Office.</div>
<div class="t" style="top:478px;font-size:10.3px;line-height:14px;color:#1c1c1c;letter-spacing:0.076px;left:161.6px;">You have <span class="lk">5 Online Payments</span> to apply.</div>
<div class="t" style="top:502px;font-size:10.3px;line-height:14px;color:#1c1c1c;letter-spacing:0.115px;left:153.7px;">As part of your monthly closing activities...</div>
<div class="t" style="top:519px;font-size:10.3px;line-height:14px;color:#1c1c1c;letter-spacing:0.09px;left:161.6px;">You should review monthly <span class="lk">Reports</span> for omissions or errors.</div>
<div class="t" style="top:535px;font-size:10.3px;line-height:14px;color:#1c1c1c;letter-spacing:0.128px;left:161.6px;">You should review the <span class="lk">Report Closing Date</span>.</div>
<div class="t" style="top:335px;font-size:9.8px;line-height:14px;color:#1c1c1c;letter-spacing:-0.075px;left:536.6px;">Indicator</div>
<div class="t" style="top:335px;font-size:9.8px;line-height:14px;color:#1c1c1c;letter-spacing:-0.278px;left:670.2px;">Amount</div>
<div class="t" style="top:335px;font-size:9.8px;line-height:14px;color:#1c1c1c;letter-spacing:-0.226px;left:715.2px;">% Last</div>
<div class="t n" style="top:354px;font-size:9.8px;line-height:14px;color:#34609f;letter-spacing:-0.421px;left:536.6px;">Procedures</div>
<div class="t n" style="top:354px;font-size:9.8px;line-height:14px;color:#5a7fb4;left:402.20000000000005px;width:300px;text-align:right;">1</div>
<div class="t n" style="top:354px;font-size:9.8px;line-height:14px;color:#5a7fb4;left:443.5px;width:300px;text-align:right;">0%</div>
<div class="t n" style="top:371px;font-size:9.8px;line-height:14px;color:#34609f;letter-spacing:-0.419px;left:536.6px;">Charges</div>
<div class="t n" style="top:371px;font-size:9.8px;line-height:14px;color:#5a7fb4;left:402.20000000000005px;width:300px;text-align:right;">$100</div>
<div class="t n" style="top:371px;font-size:9.8px;line-height:14px;color:#5a7fb4;left:443.5px;width:300px;text-align:right;">+900%</div>
<div class="t n" style="top:388px;font-size:9.8px;line-height:14px;color:#34609f;letter-spacing:-0.166px;left:536.6px;">Adjustments</div>
<div class="t n" style="top:388px;font-size:9.8px;line-height:14px;color:#5a7fb4;left:402.20000000000005px;width:300px;text-align:right;">$50</div>
<div class="t n" style="top:388px;font-size:9.8px;line-height:14px;color:#5a7fb4;left:443.5px;width:300px;text-align:right;">0%</div>
<div class="t n" style="top:406px;font-size:9.8px;line-height:14px;color:#34609f;letter-spacing:-0.328px;left:536.6px;">Receipts</div>
<div class="t n" style="top:406px;font-size:9.8px;line-height:14px;color:#5a7fb4;left:402.20000000000005px;width:300px;text-align:right;">$50</div>
<div class="t n" style="top:406px;font-size:9.8px;line-height:14px;color:#5a7fb4;left:443.5px;width:300px;text-align:right;">-98%</div>
<div class="t n" style="top:423px;font-size:9.8px;line-height:14px;color:#34609f;letter-spacing:-0.343px;left:536.6px;">Refunds</div>
<div class="t n" style="top:423px;font-size:9.8px;line-height:14px;color:#5a7fb4;left:402.20000000000005px;width:300px;text-align:right;">$0</div>
<div class="t n" style="top:423px;font-size:9.8px;line-height:14px;color:#5a7fb4;left:443.5px;width:300px;text-align:right;">0%</div>
<div class="t n" style="top:440px;font-size:9.8px;line-height:14px;color:#34609f;letter-spacing:-0.388px;left:536.6px;">A/R Balance</div>
<div class="t n" style="top:440px;font-size:9.8px;line-height:14px;color:#5a7fb4;left:402.20000000000005px;width:300px;text-align:right;">$60</div>
<div class="t n" style="top:440px;font-size:9.8px;line-height:14px;color:#5a7fb4;left:443.5px;width:300px;text-align:right;">0%</div>
<div class="t n" style="top:458px;font-size:9.8px;line-height:14px;color:#34609f;letter-spacing:-0.217px;left:536.6px;">Days in A/R</div>
<div class="t n" style="top:458px;font-size:9.8px;line-height:14px;color:#5a7fb4;left:402.20000000000005px;width:300px;text-align:right;">0</div>
<div class="t n" style="top:458px;font-size:9.8px;line-height:14px;color:#5a7fb4;left:443.5px;width:300px;text-align:right;">0%</div>
<div class="t n" style="top:475px;font-size:9.8px;line-height:14px;color:#34609f;letter-spacing:-0.317px;left:536.6px;">Days Revenue Outstanding</div>
<div class="t n" style="top:475px;font-size:9.8px;line-height:14px;color:#5a7fb4;left:402.20000000000005px;width:300px;text-align:right;">4</div>
<div class="t n" style="top:475px;font-size:9.8px;line-height:14px;color:#5a7fb4;left:443.5px;width:300px;text-align:right;">0%</div>
<div class="t n" style="top:492px;font-size:9.8px;line-height:14px;color:#34609f;letter-spacing:-0.217px;left:536.6px;">Days to Bill</div>
<div class="t n" style="top:492px;font-size:9.8px;line-height:14px;color:#5a7fb4;left:402.20000000000005px;width:300px;text-align:right;">0</div>
<div class="t n" style="top:492px;font-size:9.8px;line-height:14px;color:#5a7fb4;left:443.5px;width:300px;text-align:right;">0%</div>
<div class="t" style="top:515px;font-size:9.8px;line-height:14px;color:#222;letter-spacing:-0.227px;left:556.4px;">Month</div>
<div class="t n" style="top:515px;font-size:9.8px;line-height:14px;color:#5a7fb4;letter-spacing:-0.217px;left:631.3px;">Quarter</div>
<div class="t n" style="top:515px;font-size:9.8px;line-height:14px;color:#5a7fb4;letter-spacing:-0.324px;left:708.5px;">Year</div>
<div class="t" style="top:539px;font-size:7.2px;line-height:11px;color:#222;letter-spacing:0.103px;left:591px;">Last Updated: 8/1/19 4:32 AM</div>
</body></html>
